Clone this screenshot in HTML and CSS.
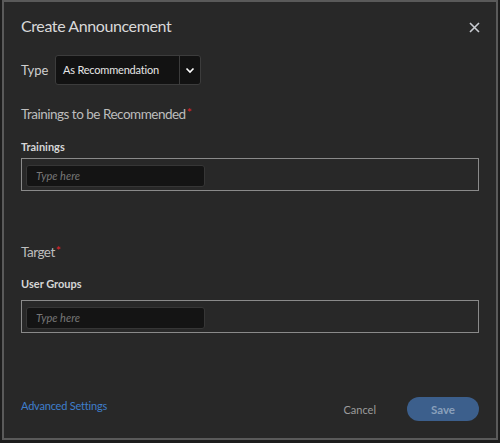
FILE: index.html
```html
<!DOCTYPE html>
<html>
<head>
    <title>Create Announcement</title>
    <link rel="stylesheet" href="styles.css">
</head>
<body>
    <div class="dialog">
        <div class="dialog-header">
            <h1 class="dialog-title">Create Announcement</h1>
            <span class="close-btn">
                <svg width="11" height="11" viewBox="0 0 11 11"><path d="M1 1L10 10M10 1L1 10" stroke="#c9ccd2" stroke-width="1.6" fill="none"/></svg>
            </span>
        </div>

        <div class="type-row">
            <label class="type-label">Type</label>
            <div class="select">
                <span class="select-value">As Recommendation</span>
                <span class="select-arrow">
                    <svg width="10" height="7" viewBox="0 0 10 7"><path d="M1.5 1.5L5 5L8.5 1.5" stroke="#fff" stroke-width="1.6" fill="none"/></svg>
                </span>
            </div>
        </div>

        <!-- trainings -->
        <div class="section-title first">Trainings to be Recommended<span class="req">*</span></div>
        <div class="field-label">Trainings</div>
        <div class="picker">
            <input class="picker-input" type="text" placeholder="Type here">
        </div>

        <!-- target -->
        <div class="section-title second">Target<span class="req">*</span></div>
        <div class="field-label">User Groups</div>
        <div class="picker second-picker">
            <input class="picker-input" type="text" placeholder="Type here">
        </div>

        <div class="dialog-footer">
            <a class="advanced-link">Advanced Settings</a>
            <div class="actions">
                <button class="btn-cancel">Cancel</button>
                <button class="btn-save">Save</button>
            </div>
        </div>
    </div>
</body>
</html>
```

FILE: styles.css
```css
html, body { margin: 0; padding: 0; background: #1d1d1d; }
body { font-family: "Lato", "Noto Sans", sans-serif; }
.dialog { position: relative; box-sizing: border-box; width: 496px; height: 440px; margin-left: 2px;
    background: #282828; border: 2px solid #5a5a5a;
    padding: 12px 17px 17px 17px; display: flex; flex-direction: column; }
.dialog-header { display: flex; justify-content: space-between; align-items: center; height: 24px; }
.dialog-title { margin: 0; font-size: 16px; font-weight: 400; color: #d9d9d9; line-height: 24px; letter-spacing: -0.4px; }
.close-btn { display: flex; margin-right: -1px; margin-top: 2px; }

.type-row { display: flex; align-items: center; margin-top: 17px; }
.type-label { font-size: 13px; color: #cfcfcf; width: 34px; }
.select { display: flex; width: 146px; height: 30px; box-sizing: border-box; background: #121212;
    border: 1px solid #3c3c3c; border-radius: 3px; }
.select-value { flex: 1; padding-left: 7px; font-size: 11px; letter-spacing: -0.2px; color: #e6e6e6; line-height: 28px; }
.select-arrow { width: 20px; border-left: 1px solid #3c3c3c; display: flex; align-items: center; justify-content: center; }

.section-title { font-size: 13.5px; letter-spacing: -0.5px; line-height: 20px; color: #bdbdbd; }
.section-title.first { margin-top: 19px; }
.section-title.second { margin-top: 51px; }
.req { color: #e0242b; font-size: 12px; vertical-align: top; position: relative; top: -1px; margin-left: 1px; }
.field-label { font-size: 11px; font-weight: 700; color: #d6d6d6; line-height: 16px; margin-top: 15px; }
.section-title.second + .field-label { margin-top: 14px; }

.picker { margin-top: 3px; box-sizing: border-box; height: 33px; border: 1px solid #8a8a8a; padding: 5px 4px 4px 4px; }
.second-picker { margin-top: 8px; }
.picker-input { box-sizing: border-box; width: 179px; height: 22px; background: #141414; border: 1px solid #363636;
    border-radius: 3px; padding: 0 9px; font-family: inherit; font-size: 11px; font-style: italic; color: #ddd; outline: none; }
.picker-input::placeholder { color: #777; }

.dialog-footer { margin-top: auto; display: flex; justify-content: space-between; align-items: center; }
.advanced-link { font-size: 11px; letter-spacing: -0.2px; color: #3f7ecb; position: relative; top: -4px; }
.actions { display: flex; align-items: center; gap: 31px; }
.btn-cancel { background: none; border: none; padding: 0; font-family: inherit; font-size: 11px; color: #9c9c9c; }
.btn-save { width: 72px; height: 24px; border: none; border-radius: 12px; background: #3c5f8c;
    font-family: inherit; font-size: 11.5px; font-weight: 700; color: #8aa0bb; }
```
